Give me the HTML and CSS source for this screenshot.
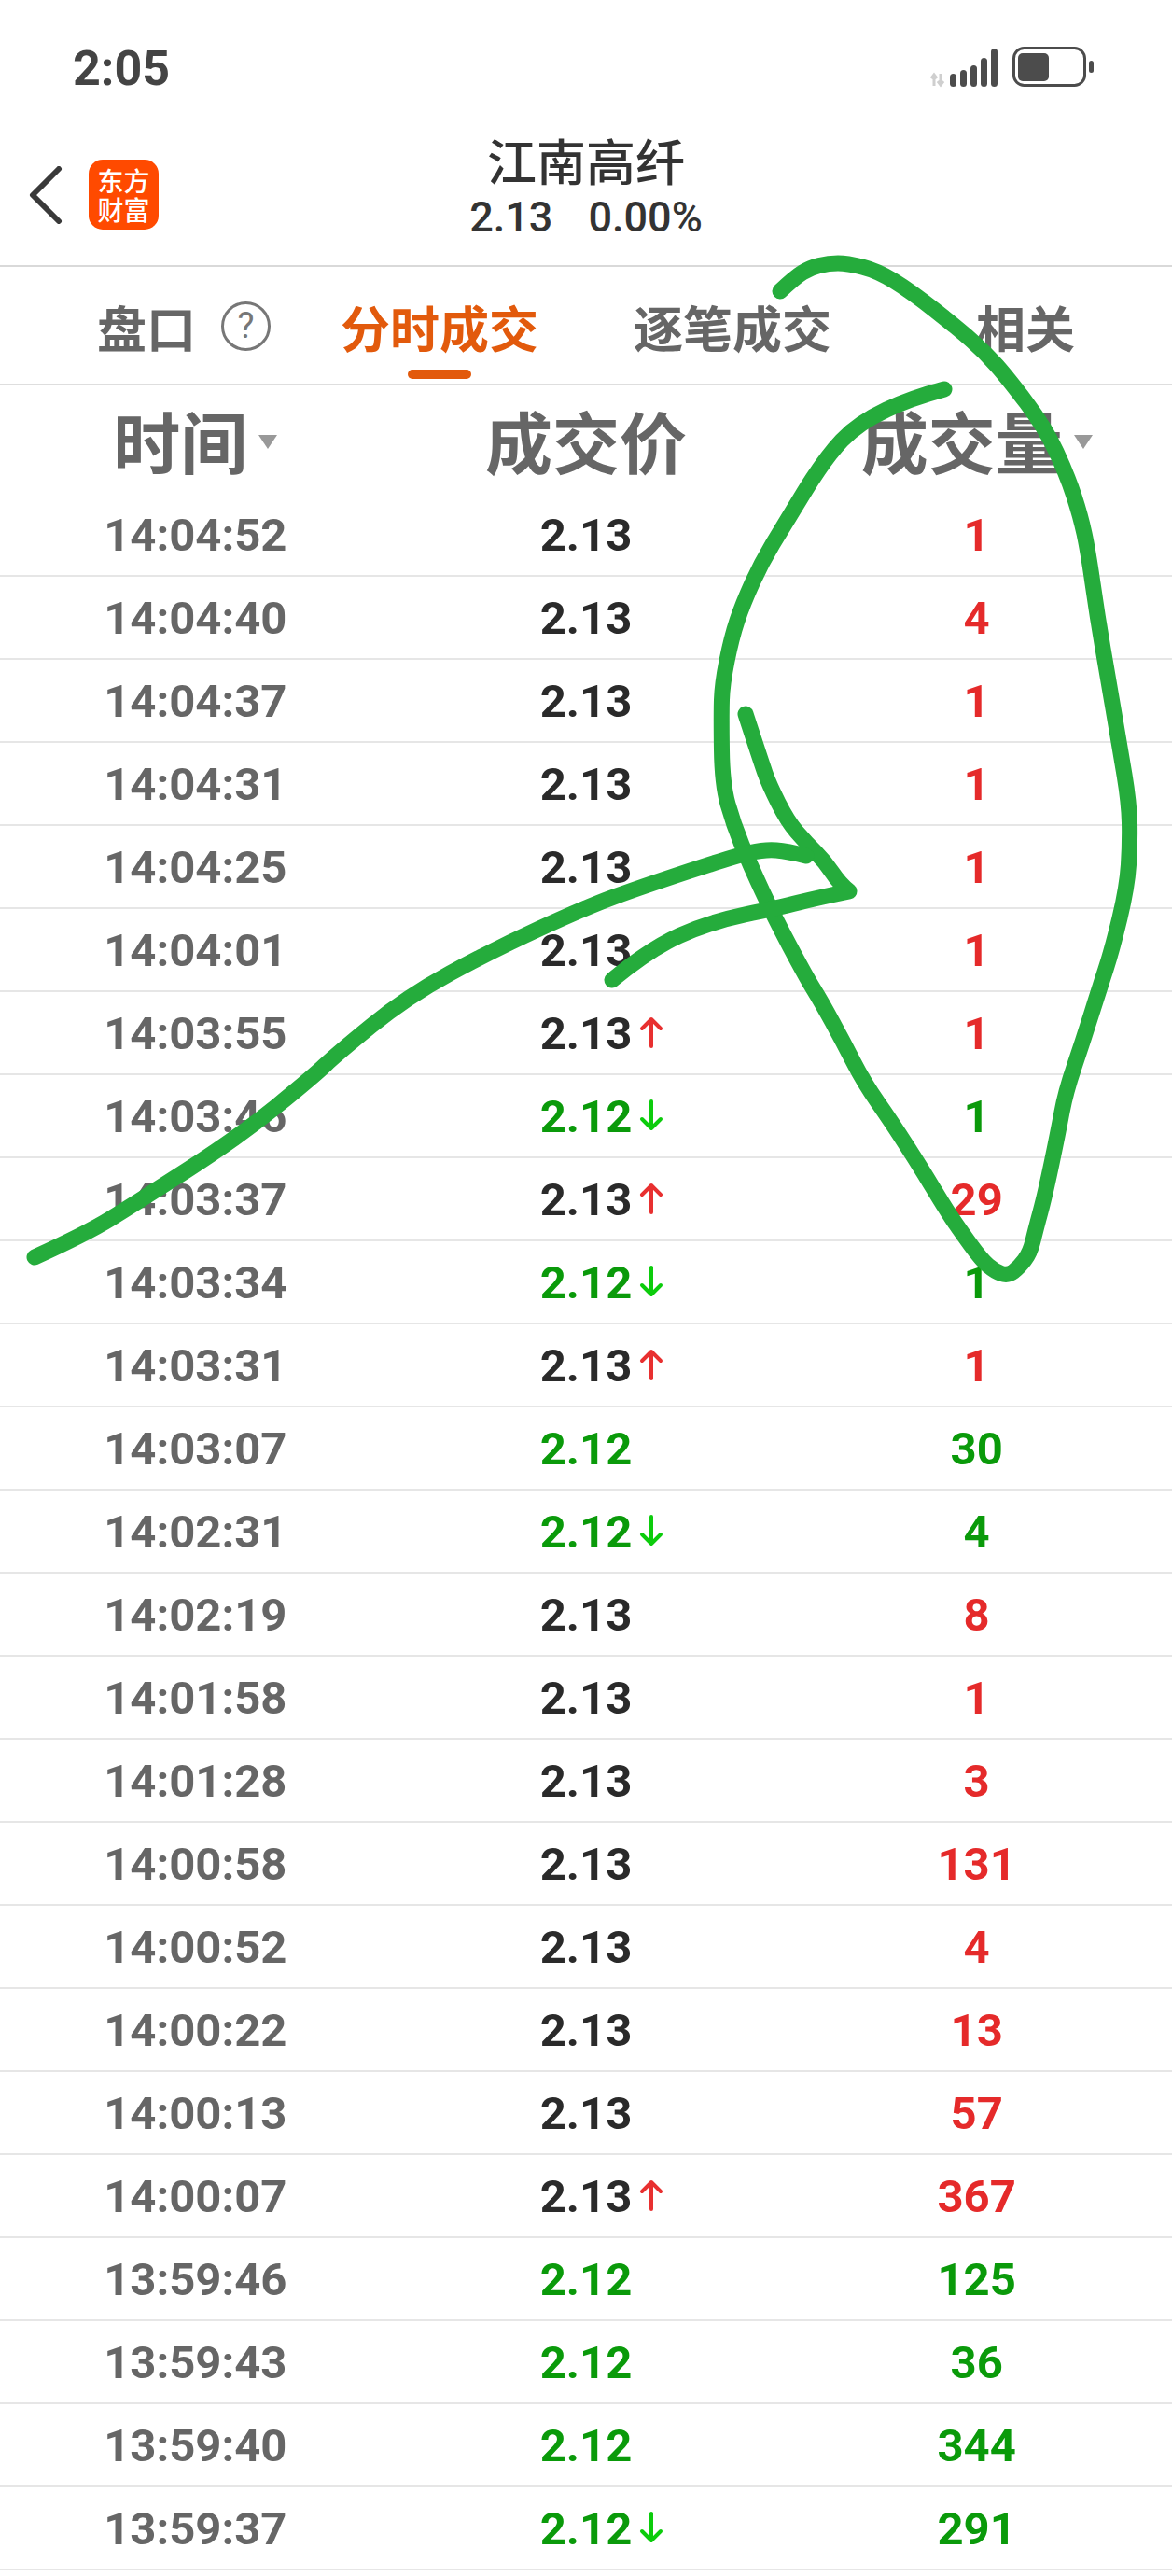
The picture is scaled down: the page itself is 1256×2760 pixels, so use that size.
FILE: index.html
```html
<!DOCTYPE html>
<html lang="zh">
<head>
<meta charset="utf-8">
<title>江南高纤</title>
<link rel="stylesheet" href="styles.css">
</head>
<body>
<svg class="defs" width="0" height="0" aria-hidden="true">
  <symbol id="up" viewBox="0 0 26 34"><path d="M13 32V3M3 13L13 3L23 13" fill="none" stroke="currentColor" stroke-width="4" stroke-linecap="round" stroke-linejoin="round"/></symbol>
  <symbol id="down" viewBox="0 0 26 34"><path d="M13 2V31M3 21L13 31L23 21" fill="none" stroke="currentColor" stroke-width="4" stroke-linecap="round" stroke-linejoin="round"/></symbol>
  <symbol id="caret" viewBox="0 0 20 15"><path d="M0 0H20L10 15Z" fill="currentColor"/></symbol>
</svg>
<main class="page">
  <header class="status">
    <span class="clock">2:05</span>
    <svg class="status-icons" width="176" height="44" viewBox="996 50 176 44">
      <path d="M1001 92V81M998 84L1001 80L1004 84M1008 79V90M1005 87L1008 91L1011 87" fill="none" stroke="#cfcfcf" stroke-width="3"/>
      <g fill="#4c4c4c">
        <rect x="1018" y="79" width="7" height="14" rx="3.5"/>
        <rect x="1029" y="75" width="7" height="18" rx="3.5"/>
        <rect x="1040" y="70" width="7" height="23" rx="3.5"/>
        <rect x="1051" y="62" width="7" height="31" rx="3.5"/>
        <rect x="1062" y="52" width="7" height="41" rx="3.5"/>
        <rect x="1091" y="57" width="33" height="30" rx="5"/>
        <rect x="1167" y="65" width="5" height="13" rx="2.5"/>
      </g>
      <rect x="1086.5" y="51.5" width="76" height="40" rx="11" fill="none" stroke="#4c4c4c" stroke-width="3"/>
    </svg>
  </header>

  <nav class="titlebar">
    <div class="brand">
      <svg class="back" width="36" height="62" viewBox="0 0 36 62"><path d="M32 3L4 31L32 59" fill="none" stroke="#3a3a3a" stroke-width="6" stroke-linecap="round" stroke-linejoin="round"/></svg>
      <div class="logo"><span>东方</span><span>财富</span></div>
    </div>
    <div class="stock">
      <div class="stock-name">江南高纤</div>
      <div class="stock-quote"><span>2.13</span><span>0.00%</span></div>
    </div>
  </nav>

  <div class="tabs">
    <div class="tab"><span class="tab-label">盘口<span class="help">?</span></span></div>
    <div class="tab tab-active"><span class="tab-label">分时成交</span></div>
    <div class="tab"><span class="tab-label">逐笔成交</span></div>
    <div class="tab"><span class="tab-label">相关</span></div>
  </div>

  <div class="table-head">
    <div class="head-cell">时间<svg class="caret" width="20" height="15"><use href="#caret"/></svg></div>
    <div class="head-cell">成交价</div>
    <div class="head-cell">成交量<svg class="caret" width="20" height="15"><use href="#caret"/></svg></div>
  </div>

  <div class="rows">
    <div class="row"><span class="time">14:04:52</span><span class="price">2.13</span><span class="vol red">1</span></div>
    <div class="row"><span class="time">14:04:40</span><span class="price">2.13</span><span class="vol red">4</span></div>
    <div class="row"><span class="time">14:04:37</span><span class="price">2.13</span><span class="vol red">1</span></div>
    <div class="row"><span class="time">14:04:31</span><span class="price">2.13</span><span class="vol red">1</span></div>
    <div class="row"><span class="time">14:04:25</span><span class="price">2.13</span><span class="vol red">1</span></div>
    <div class="row"><span class="time">14:04:01</span><span class="price">2.13</span><span class="vol red">1</span></div>
    <div class="row"><span class="time">14:03:55</span><span class="price"><span class="num">2.13<svg class="tick tick-up" width="26" height="34"><use href="#up"/></svg></span></span><span class="vol red">1</span></div>
    <div class="row"><span class="time">14:03:46</span><span class="price green"><span class="num">2.12<svg class="tick tick-down" width="26" height="34"><use href="#down"/></svg></span></span><span class="vol green">1</span></div>
    <div class="row"><span class="time">14:03:37</span><span class="price"><span class="num">2.13<svg class="tick tick-up" width="26" height="34"><use href="#up"/></svg></span></span><span class="vol red">29</span></div>
    <div class="row"><span class="time">14:03:34</span><span class="price green"><span class="num">2.12<svg class="tick tick-down" width="26" height="34"><use href="#down"/></svg></span></span><span class="vol green">1</span></div>
    <div class="row"><span class="time">14:03:31</span><span class="price"><span class="num">2.13<svg class="tick tick-up" width="26" height="34"><use href="#up"/></svg></span></span><span class="vol red">1</span></div>
    <div class="row"><span class="time">14:03:07</span><span class="price green">2.12</span><span class="vol green">30</span></div>
    <div class="row"><span class="time">14:02:31</span><span class="price green"><span class="num">2.12<svg class="tick tick-down" width="26" height="34"><use href="#down"/></svg></span></span><span class="vol green">4</span></div>
    <div class="row"><span class="time">14:02:19</span><span class="price">2.13</span><span class="vol red">8</span></div>
    <div class="row"><span class="time">14:01:58</span><span class="price">2.13</span><span class="vol red">1</span></div>
    <div class="row"><span class="time">14:01:28</span><span class="price">2.13</span><span class="vol red">3</span></div>
    <div class="row"><span class="time">14:00:58</span><span class="price">2.13</span><span class="vol red">131</span></div>
    <div class="row"><span class="time">14:00:52</span><span class="price">2.13</span><span class="vol red">4</span></div>
    <div class="row"><span class="time">14:00:22</span><span class="price">2.13</span><span class="vol red">13</span></div>
    <div class="row"><span class="time">14:00:13</span><span class="price">2.13</span><span class="vol red">57</span></div>
    <div class="row"><span class="time">14:00:07</span><span class="price"><span class="num">2.13<svg class="tick tick-up" width="26" height="34"><use href="#up"/></svg></span></span><span class="vol red">367</span></div>
    <div class="row"><span class="time">13:59:46</span><span class="price green">2.12</span><span class="vol green">125</span></div>
    <div class="row"><span class="time">13:59:43</span><span class="price green">2.12</span><span class="vol green">36</span></div>
    <div class="row"><span class="time">13:59:40</span><span class="price green">2.12</span><span class="vol green">344</span></div>
    <div class="row"><span class="time">13:59:37</span><span class="price green"><span class="num">2.12<svg class="tick tick-down" width="26" height="34"><use href="#down"/></svg></span></span><span class="vol green">291</span></div>
  </div>

  <svg class="scribble" width="1256" height="2760" viewBox="0 0 1256 2760" aria-hidden="true">
    <path d="M836 312Q852 297 860 292Q868 287 878 284.5Q888 282 898 282Q908 282 924 286Q940 290 958 301Q976 312 1002 332.5Q1028 353 1042 365.5Q1056 378 1068 391.5Q1080 405 1100 431.5Q1120 458 1132 484Q1144 510 1151 531.5Q1158 553 1162 571.5Q1166 590 1171 625Q1176 660 1182 695Q1188 730 1194 765Q1200 800 1205 830Q1210 860 1210.5 881.5Q1211 903 1209.5 926.5Q1208 950 1200 983.5Q1192 1017 1185 1038.5Q1178 1060 1169 1088.5Q1160 1117 1151 1143.5Q1142 1170 1138 1191.5Q1134 1213 1127 1246.5Q1120 1280 1115 1298.5Q1110 1317 1107 1329.5Q1104 1342 1098 1350Q1092 1358 1086 1362.5Q1080 1367 1073 1364.5Q1066 1362 1059 1356Q1052 1350 1040 1333.5Q1028 1317 1020 1305Q1012 1293 1000 1273Q988 1253 972 1228Q956 1203 941 1181.5Q926 1160 915 1138.5Q904 1117 892 1095Q880 1073 872 1060Q864 1047 847 1015Q830 983 817 955Q804 927 795 905Q786 883 780 861.5Q774 840 773.5 803.5Q773 767 773.5 750Q774 733 779 708Q784 683 790 665Q796 647 806 625Q816 603 828 583Q840 563 862 527Q884 491 902 472Q920 453 950 439Q975 427 1012 417"/>
    <path d="M799 765Q816 817 820 828.5Q824 840 834 860Q844 880 854 891.5Q864 903 874 913Q884 923 892 935Q900 947 910 955Q876 962 856 967Q836 972 798 980Q760 988 728 1002.5Q696 1017 656 1050"/>
    <path d="M37 1347Q92 1322 118 1306Q144 1290 200 1254Q256 1218 296 1185.5Q336 1153 348 1141.5Q360 1130 398 1099Q436 1068 482 1043Q528 1018 578 995Q628 972 658 961Q688 950 738 933.5Q788 917 804 913.5Q820 910 832 911Q844 912 864 917"/>
  </svg>
</main>
</body>
</html>
```
FILE: styles.css
```css
* { box-sizing: border-box; }
html, body { margin: 0; padding: 0; background: #fff; }
body { font-family: Roboto, "Noto Sans CJK SC", sans-serif; }
.defs { position: absolute; }
.page { position: relative; width: 1256px; height: 2760px; overflow: hidden; }

.status { height: 130px; display: flex; justify-content: space-between; align-items: flex-start; padding: 50px 84px 0 78px; }
.clock { font-size: 52px; line-height: 48px; font-weight: 700; color: #444; }
.status-icons { display: block; margin-top: 0; }

.titlebar { position: relative; height: 156px; border-bottom: 2px solid #d9d9d9; display: flex; justify-content: center; }
.brand { position: absolute; left: 31px; top: 41px; display: flex; align-items: center; gap: 28px; }
.back { display: block; }
.logo { width: 75px; height: 75px; border-radius: 15px; background: #ff4a00; color: #fff; font-family: "Noto Sans CJK SC", sans-serif; font-size: 28px; line-height: 31px; font-weight: 500; display: flex; flex-direction: column; align-items: center; justify-content: center; }
.stock { text-align: center; color: #333; padding-top: 8px; }
.stock-name { font-family: "Noto Sans CJK SC", sans-serif; font-size: 53px; line-height: 66px; font-weight: 500; }
.stock-quote { display: flex; gap: 38px; justify-content: center; font-size: 45px; line-height: 50px; font-weight: 500; margin-top: 4px; }

.tabs { height: 127px; border-bottom: 2px solid #dedede; display: grid; grid-template-columns: repeat(4, 1fr); }
.tab { position: relative; text-align: center; color: #666; font-family: "Noto Sans CJK SC", sans-serif; font-size: 53px; line-height: 68px; font-weight: 700; padding-top: 30px; }
.tab-label { position: relative; display: inline-block; }
.help { position: absolute; left: calc(100% + 27px); top: 7px; width: 53px; height: 53px; border: 3px solid #777; border-radius: 50%; font-family: Roboto, sans-serif; font-size: 38px; line-height: 47px; font-weight: 400; text-align: center; color: #777; }
.tab-active { color: #e25a0c; }
.tab-active::after { content: ""; position: absolute; left: 50%; bottom: 5px; width: 68px; height: 10px; margin-left: -34px; border-radius: 5px; background: #e25a0c; }

.table-head { height: 116px; display: grid; grid-template-columns: repeat(3, 1fr); }
.head-cell { display: flex; align-items: center; justify-content: center; gap: 12px; color: #666; font-family: "Noto Sans CJK SC", sans-serif; font-size: 72px; line-height: 116px; font-weight: 700; }
.caret { display: block; color: #999; margin-top: 4px; }

.row { height: 89px; display: grid; grid-template-columns: repeat(3, 1fr); align-items: center; border-bottom: 2px solid #e6e6e6; text-align: center; font-size: 49px; line-height: 89px; font-weight: 700; }
.time { color: #666; }
.price { color: #2a2a2a; }
.num { position: relative; display: inline-block; }
.vol { display: block; }
.red { color: #e52a2a; }
.green { color: #0a9a0a; }
.tick { position: absolute; left: calc(100% + 8px); top: 26px; }
.tick-up { color: #e83030; }
.tick-down { color: #0ccc0c; }

.scribble { position: absolute; left: 0; top: 0; pointer-events: none; }
.scribble path { fill: none; stroke: #25ac3c; stroke-width: 17; stroke-linecap: round; stroke-linejoin: round; }
```
